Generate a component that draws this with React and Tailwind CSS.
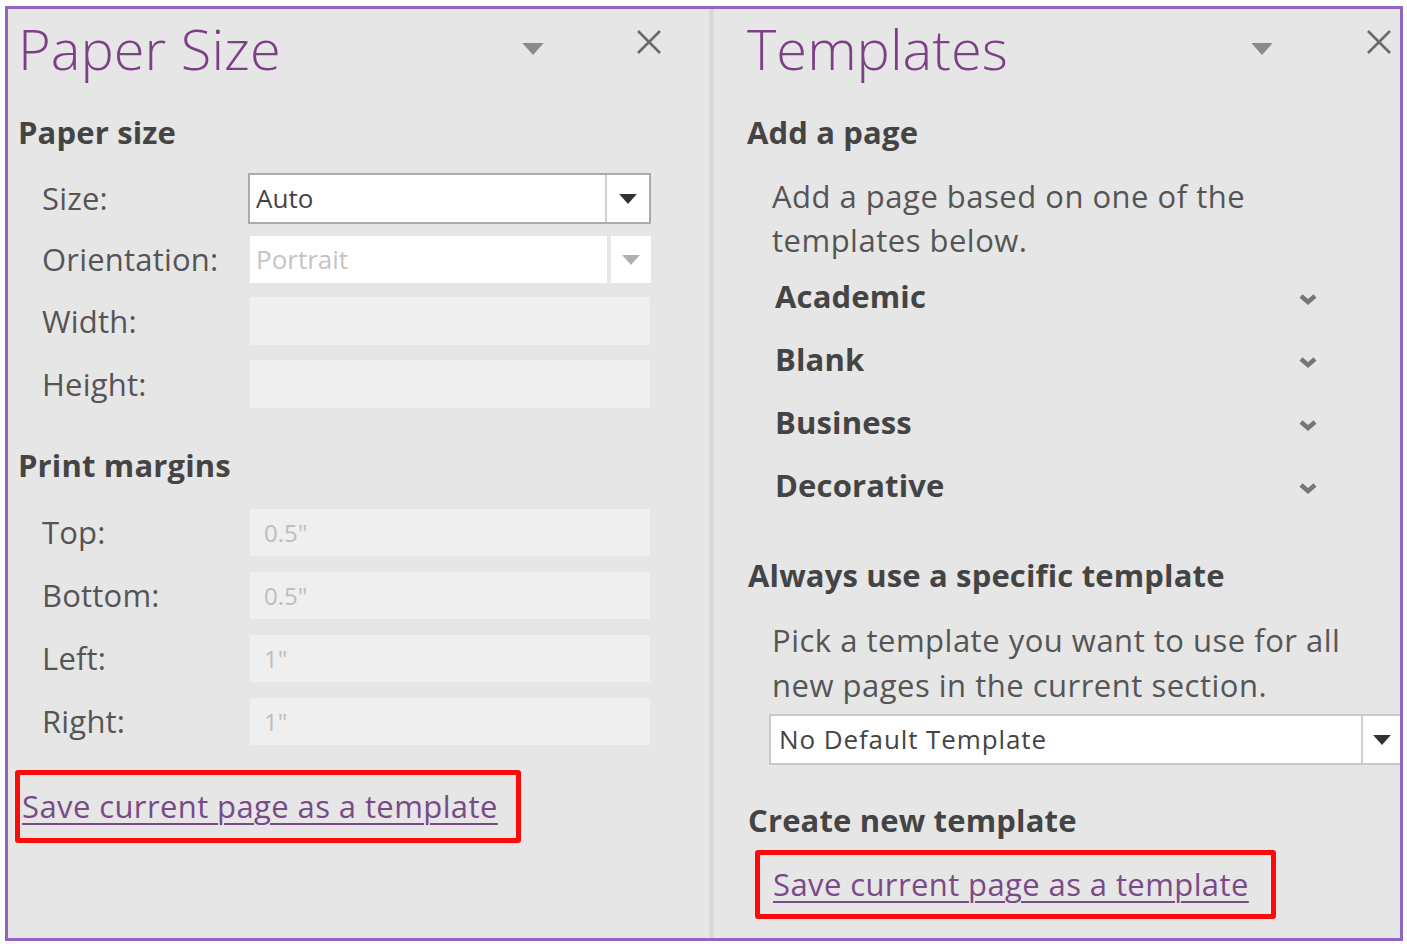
const font = { fontFamily: '"Open Sans", "Noto Sans", sans-serif' };

const Tri = ({ color = '#333', w = 16 }) => (
    <svg width={w} height={w / 2 + 1} viewBox="0 0 16 9">
        <path d="M0 0 L16 0 L8 9 Z" fill={color} />
    </svg>
);

const Close = () => (
    <svg width="26" height="26" viewBox="0 0 26 26">
        <path d="M2 2 L24 24 M24 2 L2 24" stroke="#6a6a6a" strokeWidth="2.6" />
    </svg>
);

const Chevron = () => (
    <svg width="20" height="12" viewBox="0 0 20 12">
        <path d="M3 2 L10 8 L17 2" stroke="#777" strokeWidth="4.5" fill="none" />
    </svg>
);

const PaneHeader = ({ title, arrowX, closeX }) => (
    <div className="relative h-[78px]">
        <div className="absolute top-[4px] left-0 text-[56px] font-light leading-[70px] text-[#7d3f86]">{title}</div>
        <div className="absolute top-[34px]" style={{ left: arrowX }}><Tri color="#8a8a8a" w={22} /></div>
        <div className="absolute top-[20px]" style={{ left: closeX }}><Close /></div>
    </div>
);

const FieldRow = ({ label, mt, h, children }) => (
    <div className="flex items-center" style={{ marginTop: mt, height: h }}>
        <div className="w-[206px] text-[31px] text-[#555] tracking-[0.2px]">{label}</div>
        {children}
    </div>
);

const Disabled = ({ value }) => (
    <div className="ml-[2px] w-[400px] h-full bg-[#efefef] flex items-center pl-[14px] text-[24px] text-[#bdbdbd]">{value}</div>
);

const Heading = ({ children, mt }) => (
    <div className="h-[40px] flex items-center text-[31px] font-bold text-[#444] tracking-[0.15px]" style={{ marginTop: mt }}>{children}</div>
);

const SaveLink = ({ pl }) => (
    <div className="h-full flex items-center" style={{ paddingLeft: pl }}>
        <span className="text-[31px] text-[#7a4a88] underline underline-offset-[5px] decoration-[2px] tracking-[0.4px]">Save current page as a template</span>
    </div>
);

const templates = ['Academic', 'Blank', 'Business', 'Decorative'];

export default function App() {
    return (
        <div className="w-[1407px] h-[944px] bg-white pt-[6px] pl-[5px]" style={font}>
            <div className="w-[1398px] h-[935px] border-[3px] border-[#9066c2] bg-[#e6e6e6] flex overflow-hidden">
                {/* left pane */}
                <div className="w-[700px] shrink-0">
                    <div className="pl-[10px]">
                        <PaneHeader title="Paper Size" arrowX={504} closeX={618} />
                        <Heading mt={25}>Paper size</Heading>
                    </div>
                    <div className="pl-[34px]">
                        <FieldRow label="Size:" mt={21} h={51}>
                            <div className="w-[403px] h-full bg-white border-2 border-[#ababab] flex">
                                <div className="flex-1 flex items-center pl-[6px] text-[26px] text-[#444]">Auto</div>
                                <div className="w-[44px] border-l-2 border-[#d0d0d0] flex items-center justify-center"><Tri color="#333" w={18} /></div>
                            </div>
                        </FieldRow>
                        <FieldRow label="Orientation:" mt={12} h={47}>
                            <div className="ml-[2px] w-[401px] h-full flex gap-[4px]">
                                <div className="flex-1 bg-white flex items-center pl-[6px] text-[26px] text-[#c4c4c4]">Portrait</div>
                                <div className="w-[40px] bg-white flex items-center justify-center"><Tri color="#b0b0b0" w={18} /></div>
                            </div>
                        </FieldRow>
                        <FieldRow label="Width:" mt={14} h={48}><Disabled value="" /></FieldRow>
                        <FieldRow label="Height:" mt={15} h={48}><Disabled value="" /></FieldRow>
                    </div>
                    <div className="pl-[10px]">
                        <Heading mt={37}>Print margins</Heading>
                    </div>
                    <div className="pl-[34px]">
                        <FieldRow label="Top:" mt={24} h={47}><Disabled value={'0.5"'} /></FieldRow>
                        <FieldRow label="Bottom:" mt={16} h={47}><Disabled value={'0.5"'} /></FieldRow>
                        <FieldRow label="Left:" mt={16} h={47}><Disabled value={'1"'} /></FieldRow>
                        <FieldRow label="Right:" mt={16} h={47}><Disabled value={'1"'} /></FieldRow>
                    </div>
                    <div className="ml-[7px] mt-[25px] w-[506px] h-[73px] border-[5px] border-[#ff0a0a] rounded-[3px]">
                        <SaveLink pl={2} />
                    </div>
                </div>

                {/* divider */}
                <div className="w-[7px] shrink-0 flex justify-center bg-[#e2e2e2]">
                    <div className="w-[3px] h-full bg-[#d6d6d6]" />
                </div>

                {/* right pane */}
                <div className="flex-1 min-w-0">
                    <div className="pl-[32px]">
                        <PaneHeader title="Templates" arrowX={504} closeX={619} />
                        <Heading mt={25}>Add a page</Heading>
                    </div>
                    <div className="pl-[57px] mt-[22px] text-[31px] leading-[44px] text-[#555] tracking-[0.5px]">
                        Add a page based on one of the<br />templates below.
                    </div>
                    <div className="pl-[60px] pr-[82px] mt-[3px]">
                        {templates.map((name) => (
                            <div key={name} className="h-[63px] flex items-center justify-between">
                                <span className="text-[31px] font-bold text-[#444] tracking-[0.15px]">{name}</span>
                                <span className="mt-[6px]"><Chevron /></span>
                            </div>
                        ))}
                    </div>
                    <div className="pl-[33px]">
                        <Heading mt={38}>Always use a specific template</Heading>
                    </div>
                    <div className="pl-[57px] mt-[23px] text-[31px] leading-[45px] text-[#555] tracking-[0.5px]">
                        Pick a template you want to use for all<br />new pages in the current section.
                    </div>
                    <div className="ml-[54px] mt-[6px] w-[660px] h-[51px] bg-white border-2 border-[#c8c8c8] flex">
                        <div className="w-[590px] flex items-center pl-[8px] text-[26px] text-[#444] tracking-[0.9px]">No Default Template</div>
                        <div className="w-[40px] border-l-2 border-[#cfcfcf] flex items-center justify-center"><Tri color="#333" w={18} /></div>
                    </div>
                    <div className="pl-[33px]">
                        <Heading mt={35}>Create new template</Heading>
                    </div>
                    <div className="ml-[40px] mt-[10px] w-[521px] h-[69px] border-[5px] border-[#ff0a0a] rounded-[3px]">
                        <SaveLink pl={13} />
                    </div>
                </div>
            </div>
        </div>
    );
}
